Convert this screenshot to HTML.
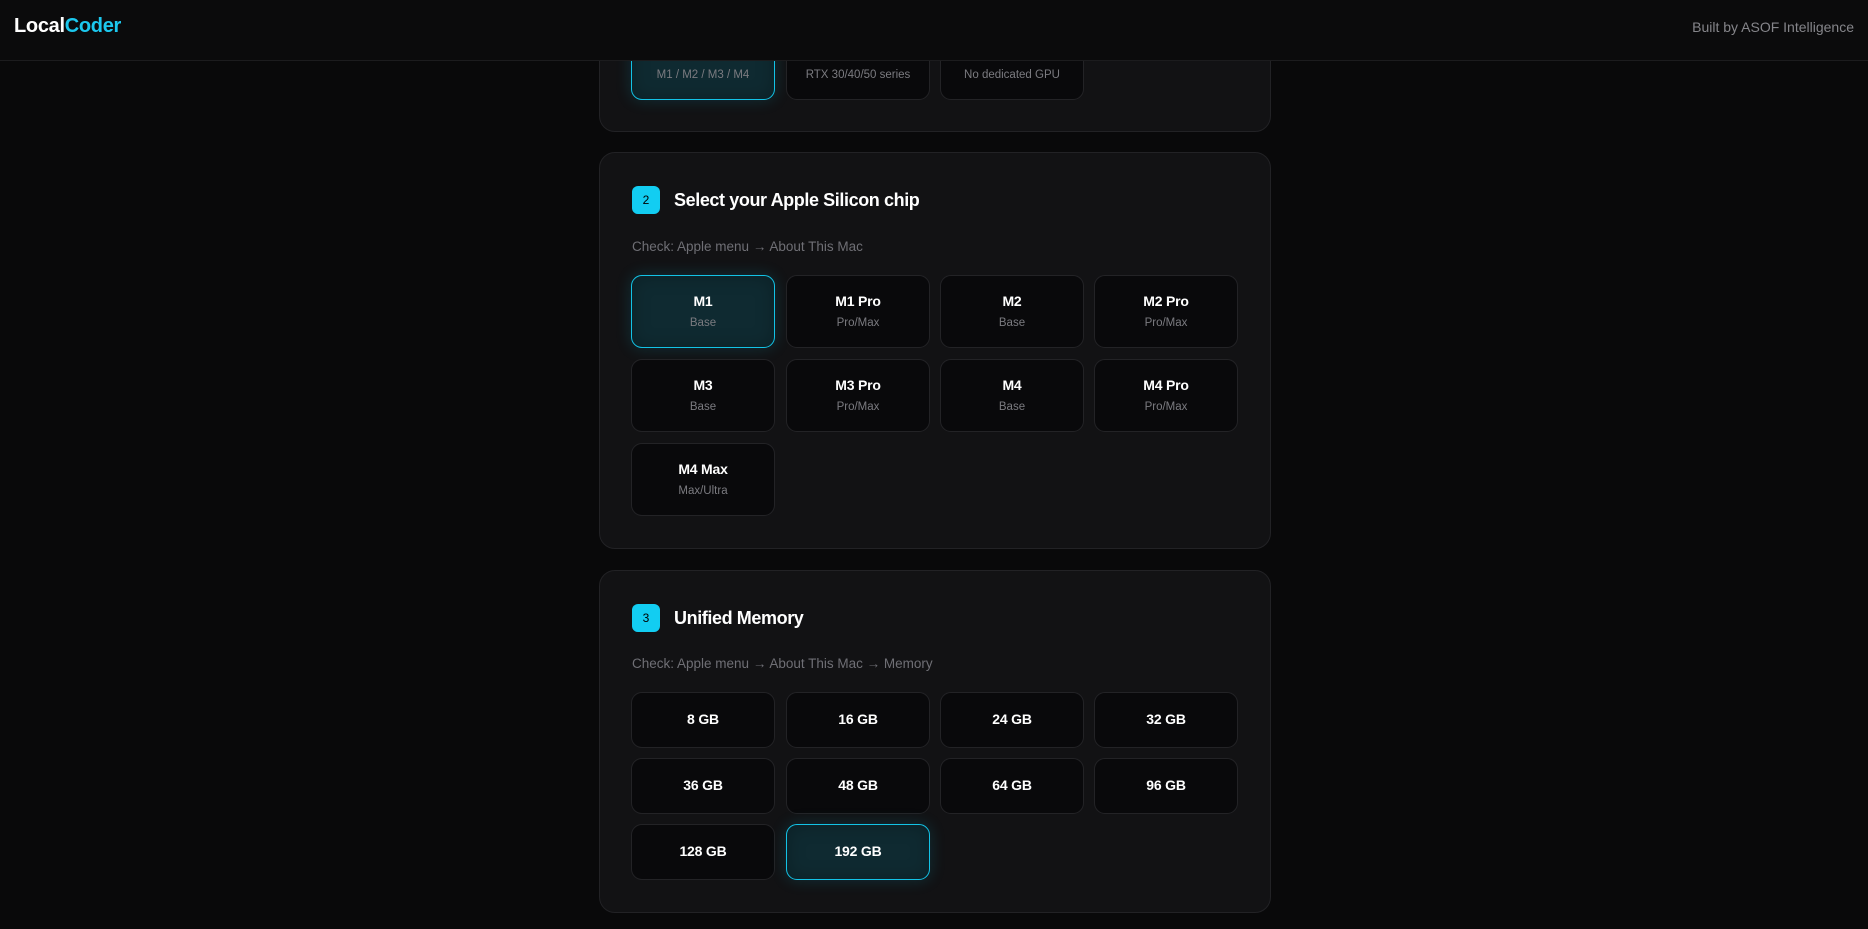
<!DOCTYPE html>
<html><head><meta charset="utf-8"><style>
*{box-sizing:border-box;margin:0;padding:0}
body{width:1868px;height:929px;overflow:hidden;background:#09090a;font-family:"Liberation Sans",sans-serif;position:relative}
.hdr{position:absolute;left:0;top:0;width:1868px;height:61px;background:#0b0b0c;border-bottom:1px solid #1c1c1e;z-index:5}
.logo{position:absolute;left:14px;top:15px;font-size:20px;font-weight:bold;color:#fff;letter-spacing:-0.3px}
.logo span{color:#1cc8ee}
.built{position:absolute;right:14px;top:19px;font-size:14px;color:#85858a}
.card{position:absolute;left:599px;width:672px;background:#121214;border:1px solid #222225;border-radius:16px}
.btn{position:absolute;width:144px;background:#09090b;border:1px solid #232326;border-radius:11px;text-align:center;color:#fff}
.sel{background:#0f2a31;border:1px solid #13c3e6;box-shadow:0 0 16px rgba(19,195,230,0.18),inset 0 0 18px rgba(0,0,0,0.25)}
.t{position:absolute;left:0;right:0;font-size:14px;font-weight:bold;letter-spacing:-0.2px}
.s{position:absolute;left:0;right:0;font-size:11.5px;color:#7b7b80}
.badge{position:absolute;width:28px;height:28px;border-radius:6px;background:#12cdf2;color:#000;font-size:12px;text-align:center;line-height:28px}
.title{position:absolute;font-size:18px;font-weight:bold;color:#fff;letter-spacing:-0.4px}
.check{position:absolute;font-size:13.5px;color:#6f6f75}
.m .t{top:18px}
</style></head><body>
<div class="hdr"><div class="logo">Local<span>Coder</span></div><div class="built">Built by ASOF Intelligence</div></div>

<div class="card" style="top:-100px;height:232px">
  <div class="btn sel" style="left:31px;top:126px;height:73px"><div class="s" style="top:41px">M1 / M2 / M3 / M4</div></div>
  <div class="btn" style="left:186px;top:126px;height:73px"><div class="s" style="top:41px">RTX 30/40/50 series</div></div>
  <div class="btn" style="left:340px;top:126px;height:73px"><div class="s" style="top:41px">No dedicated GPU</div></div>
</div>

<div class="card" style="top:152px;height:397px">
  <div class="badge" style="left:32px;top:33px">2</div>
  <div class="title" style="left:74px;top:37px">Select your Apple Silicon chip</div>
  <div class="check" style="left:32px;top:86px">Check: Apple menu → About This Mac</div>
  <div class="btn sel" style="left:31px;top:122px;height:73px"><div class="t" style="top:17px">M1</div><div class="s" style="top:41px">Base</div></div>
  <div class="btn" style="left:186px;top:122px;height:73px"><div class="t" style="top:17px">M1 Pro</div><div class="s" style="top:41px">Pro/Max</div></div>
  <div class="btn" style="left:340px;top:122px;height:73px"><div class="t" style="top:17px">M2</div><div class="s" style="top:41px">Base</div></div>
  <div class="btn" style="left:494px;top:122px;height:73px"><div class="t" style="top:17px">M2 Pro</div><div class="s" style="top:41px">Pro/Max</div></div>
  <div class="btn" style="left:31px;top:206px;height:73px"><div class="t" style="top:17px">M3</div><div class="s" style="top:41px">Base</div></div>
  <div class="btn" style="left:186px;top:206px;height:73px"><div class="t" style="top:17px">M3 Pro</div><div class="s" style="top:41px">Pro/Max</div></div>
  <div class="btn" style="left:340px;top:206px;height:73px"><div class="t" style="top:17px">M4</div><div class="s" style="top:41px">Base</div></div>
  <div class="btn" style="left:494px;top:206px;height:73px"><div class="t" style="top:17px">M4 Pro</div><div class="s" style="top:41px">Pro/Max</div></div>
  <div class="btn" style="left:31px;top:290px;height:73px"><div class="t" style="top:17px">M4 Max</div><div class="s" style="top:41px">Max/Ultra</div></div>
</div>

<div class="card m" style="top:570px;height:343px">
  <div class="badge" style="left:32px;top:33px">3</div>
  <div class="title" style="left:74px;top:37px">Unified Memory</div>
  <div class="check" style="left:32px;top:85px">Check: Apple menu → About This Mac → Memory</div>
  <div class="btn" style="left:31px;top:121px;height:56px"><div class="t">8 GB</div></div>
  <div class="btn" style="left:186px;top:121px;height:56px"><div class="t">16 GB</div></div>
  <div class="btn" style="left:340px;top:121px;height:56px"><div class="t">24 GB</div></div>
  <div class="btn" style="left:494px;top:121px;height:56px"><div class="t">32 GB</div></div>
  <div class="btn" style="left:31px;top:187px;height:56px"><div class="t">36 GB</div></div>
  <div class="btn" style="left:186px;top:187px;height:56px"><div class="t">48 GB</div></div>
  <div class="btn" style="left:340px;top:187px;height:56px"><div class="t">64 GB</div></div>
  <div class="btn" style="left:494px;top:187px;height:56px"><div class="t">96 GB</div></div>
  <div class="btn" style="left:31px;top:253px;height:56px"><div class="t">128 GB</div></div>
  <div class="btn sel" style="left:186px;top:253px;height:56px"><div class="t">192 GB</div></div>
</div>
</body></html>
